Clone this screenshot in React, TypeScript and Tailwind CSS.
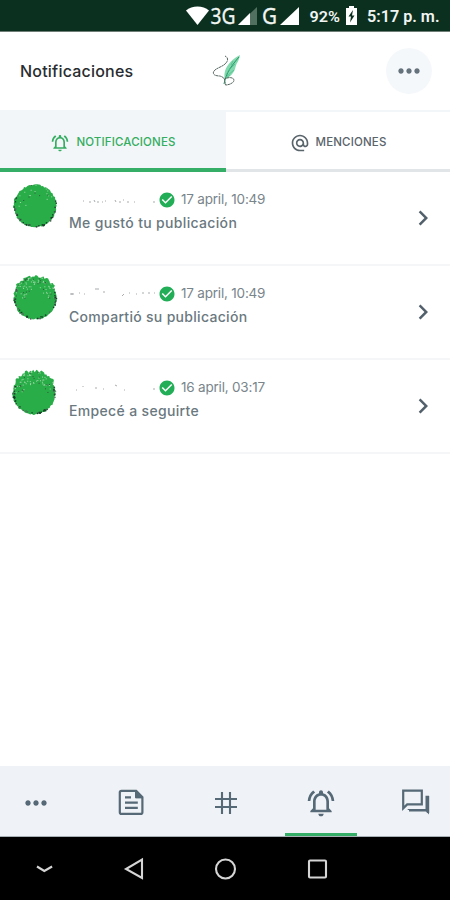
import React from 'react';
import {
  MdAlternateEmail,
  MdCheckCircle,
  MdChevronRight,
  MdMoreHoriz,
  MdOutlineNotificationsActive,
} from 'react-icons/md';

type Notice = {
  date: string;
  text: string;
  textClass: string;
  avatarClass: string;
  specks: number;
  name: string;
};

const notices: Notice[] = [
  {
    date: '17 april, 10:49',
    text: 'Me gustó tu publicación',
    textClass: 'tracking-[0.33px]',
    avatarClass: 'top-[10px] left-[11px]',
    specks: 22,
    name: 'M14 11h1M20 12h2M25 10l1 2M28 12h2M33 12h1M36 11h1M46 10l1 2M50 12h2M54 10h1M58 12h2M65 12h1M85 11v2',
  },
  {
    date: '17 april, 10:49',
    text: 'Compartió su publicación',
    textClass: 'tracking-[0.3px]',
    avatarClass: 'top-[8px] left-[11px]',
    specks: 85,
    name: 'M1 10h4M3 9v2M10 9h1M15 10h1M26 5h4M34 8h2M53 12l2-2M60 9h1M67 10h1M73 9h2M80 8v2M85 9h1',
  },
  {
    date: '16 april, 03:17',
    text: 'Empecé a seguirte',
    textClass: 'tracking-[0.34px]',
    avatarClass: 'top-[9px] left-[10px]',
    specks: 75,
    name: 'M7 12h1M14 8v1M27 9v2M34 11h1M46 7l2 1M55 12h1M84 11h2',
  },
];

function noise(n: number) {
  const v = Math.sin(n * 127.1) * 43758.5453;
  return v - Math.floor(v);
}

function Avatar({ seed, specks, className }: { seed: number; specks: number; className: string }) {
  const edge = Array.from({ length: 90 }, (_, i) => {
    const a = (i / 90) * Math.PI * 2;
    const top = Math.sin(a) < -0.5 && seed > 1 ? 1.8 : 0;
    const r = 20.6 + noise(i + seed * 100) * (1.4 + top);
    return `${(24 + Math.cos(a) * r).toFixed(2)},${(24 + Math.sin(a) * r).toFixed(2)}`;
  }).join(' ');
  const dots = Array.from({ length: specks }, (_, i) => {
    const a = Math.PI + noise(i + seed * 31) * Math.PI;
    const r = 21.5 - noise(i + seed * 57) ** 1.6 * 12;
    return (
      <rect
        key={i}
        x={24 + Math.cos(a) * r}
        y={24 + Math.sin(a) * r}
        width={1}
        height={1}
        fill={i % 4 === 0 ? '#35543c' : '#a5d8ac'}
      />
    );
  });
  const rim = Array.from({ length: 44 }, (_, i) => {
    const a = -0.3 + noise(i + seed * 71) * 3.9;
    const r = 21.3 - noise(i + seed * 13) * 1.8;
    return (
      <rect
        key={i}
        x={23.5 + Math.cos(a) * r}
        y={23.5 + Math.sin(a) * r}
        width={1.4}
        height={1.3}
        fill={i % 3 === 0 ? '#52685b' : '#173e27'}
      />
    );
  });
  return (
    <svg className={`absolute h-12 w-12 ${className}`} viewBox="0 0 48 48">
      <polygon points={edge} fill="#29ad48" />
      {dots}
      {rim}
    </svg>
  );
}

function Feather() {
  return (
    <svg className="h-10 w-9" viewBox="0 0 36 40" fill="none">
      <path d="M32 4C26 7 19 13 17 20c-1 4-.5 7-.5 9 5-3 10-7 11-13l1-3c2-3 3-6 3.500-9z" fill="#82d9ae" />
      <path d="M31 6C24 14 18 22 16 33" stroke="#259567" strokeWidth="1" />
      <path d="M18 24l4-7M19 25l7-6M21 19l6-6M23 14l2-4M17 28l5-4" stroke="#4bb989" strokeWidth=".7" />
      <path
        d="M17 5c3 1.500 3.500 4 1 7-3 4-11 5-12.500 9-1 3 3 4 6 4 3 .5 4 2 5 3 3-2 9-2 9.500 1 0 3-5 5-8.500 5l-1-6"
        stroke="#56675f"
        strokeWidth="1"
        strokeDasharray="2.500 .4"
      />
    </svg>
  );
}

function ArticleIcon() {
  return (
    <svg className="h-[27px] w-[27px]" viewBox="0 0 27 27" fill="none" stroke="#566976" strokeWidth="2.2">
      <path d="M3.500 1.900h14.700l6.200 6.200v15.100c0 1-.6 1.700-1.700 1.700H3.500c-1 0-1.700-.7-1.700-1.700V3.600c0-1 .7-1.700 1.700-1.700z" />
      <path d="M17.500 2v6.900h6.900z" fill="#566976" strokeWidth="1" />
      <path d="M7 8.400h6M7 13.600h12.800M7 18.800h12.800" />
    </svg>
  );
}

function HashIcon() {
  return (
    <svg className="h-6 w-6" viewBox="0 0 24 24" fill="none" stroke="#566976" strokeWidth="2.1">
      <path d="M8 1v22M16 1v22M1 8h22M1 16h22" />
    </svg>
  );
}

function ChatIcon() {
  return (
    <svg className="h-[30px] w-[30px]" viewBox="0 0 30 30" fill="none" stroke="#566976" strokeWidth="2.2">
      <path d="M2.200 2.700h18.600v13.700H6.200l-4 4z" />
      <path d="M6.700 22h17l4.300 4.500V7.700h-3.500v13.200H6.700z" fill="#566976" stroke="none" />
      <path d="M8 22.200h17.500M27 8v17" strokeWidth="2.400" />
    </svg>
  );
}

function StatusBar() {
  return (
    <div className="flex h-8 shrink-0 items-center border-b border-[#6f7f78] bg-[#0b3020] text-white">
      <svg className="ml-[175px] h-8 w-[275px] shrink-0" viewBox="175 0 275 32">
        <path d="M186 10.500c6-5.500 17-5.500 23 0L197.500 25z" fill="#fff" />
        <text x="210.500" y="24" fontFamily="'Noto Sans', sans-serif" fontSize="21" textLength="25" lengthAdjust="spacingAndGlyphs" fill="#f1f5f2" stroke="#f1f5f2" strokeWidth=".3">3G</text>
        <path d="M257 7v18h-19z" fill="#52705f" />
        <path d="M250 13v12h-12z" fill="#fff" />
        <text x="262" y="24" fontFamily="'Noto Sans', sans-serif" fontSize="21" textLength="15" lengthAdjust="spacingAndGlyphs" fill="#f1f5f2" stroke="#f1f5f2" strokeWidth=".3">G</text>
        <path d="M299 7v18h-19z" fill="#fff" />
        <text x="309.500" y="22" fontFamily="Roboto, sans-serif" fontWeight="600" fontSize="15.500" textLength="30.500" lengthAdjust="spacingAndGlyphs" fill="#f1f5f2">92%</text>
        <path d="M346 8h3V6h5v2h3v17h-11z" fill="#fff" />
        <path d="M353 10l-4.500 6.500h2.500l-1 6 4.500-7h-2.500z" fill="#0b3020" />
        <text x="367" y="22" fontFamily="Roboto, sans-serif" fontWeight="600" fontSize="16" textLength="72.500" lengthAdjust="spacingAndGlyphs" fill="#f1f5f2">5:17 p. m.</text>
      </svg>
    </div>
  );
}

export default function App() {
  return (
    <div className="flex h-[900px] w-[450px] flex-col overflow-hidden bg-white font-['Inter','Noto_Sans',sans-serif]">
      <StatusBar />
      <header className="grid h-[78px] shrink-0 grid-cols-[1fr_36px_1fr] items-center pr-[18px] pl-5">
        <h1 className="text-[16px] font-medium tracking-[0.21px] text-[#292d2f]">Notificaciones</h1>
        <Feather />
        <div className="flex h-[46px] w-[46px] items-center justify-center justify-self-end rounded-full bg-[#f5f8fa]">
          <MdMoreHoriz className="h-8 w-8 text-[#65737d]" />
        </div>
      </header>

      <div className="flex h-[62px] shrink-0 border-t-2 border-[#f3f6f8] text-[11.5px] font-medium">
        <div className="flex w-[226px] items-center justify-center gap-[6px] border-b-4 border-[#35ae67] bg-[#f2f6f9] pt-[5px] text-[#35ad60]">
          <MdOutlineNotificationsActive className="h-5 w-5" />
          <span className="tracking-[0.15px]">NOTIFICACIONES</span>
        </div>
        <div className="flex flex-1 items-center justify-center gap-[6px] border-b-[3px] border-[#e1e5e7] pt-[4px] text-[#59646b]">
          <MdAlternateEmail className="h-5 w-5" />
          <span className="tracking-[0.15px]">MENCIONES</span>
        </div>
      </div>

      <main className="flex-1">
        {notices.map((n, i) => (
          <div key={i} className="relative flex h-[94px] border-b-2 border-[#f4f6f7] pl-[69px]">
            <Avatar seed={i + 1} specks={n.specks} className={n.avatarClass} />
            <div className="flex flex-1 flex-col pt-[17px]">
              <div className="flex h-[21px] items-center">
                <svg className="h-5 w-[89px]" viewBox="0 0 89 20" fill="none" stroke="#9da3a4" strokeWidth=".9">
                  <path d={n.name} />
                </svg>
                <MdCheckCircle className="h-[18px] w-[18px] text-[#22ae57]" />
                <span className="ml-[5px] text-[13.5px] tracking-[-0.2px] text-[#79858b]">{n.date}</span>
              </div>
              <p className={`mt-[2px] text-[14px] leading-[21px] font-medium text-[#6a7880] ${n.textClass}`}>{n.text}</p>
            </div>
            <MdChevronRight className="mt-[31px] mr-[12px] h-[30px] w-[30px] text-[#51606a]" />
          </div>
        ))}
      </main>

      <nav className="h-[71px] shrink-0 overflow-hidden border-b border-[#a7b0b5] bg-[#eff2f6] text-[#566976]">
        <div className="-ml-[11px] grid h-full w-[474px] grid-cols-5 pt-[3px]">
          <div className="flex items-center justify-center"><MdMoreHoriz className="h-8 w-8" /></div>
          <div className="flex items-center justify-center"><ArticleIcon /></div>
          <div className="flex items-center justify-center"><HashIcon /></div>
          <div className="relative flex items-center justify-center">
            <MdOutlineNotificationsActive className="h-8 w-8" />
            <div className="absolute bottom-0 h-[3px] w-[72px] bg-[#35ae67]" />
          </div>
          <div className="flex items-center justify-center"><ChatIcon /></div>
        </div>
      </nav>

      <div className="h-[63px] shrink-0 bg-black">
        <svg className="h-[63px] w-[450px]" viewBox="0 0 450 63" fill="none" stroke="#d5d5d5" strokeWidth="2.1">
          <path d="M37 29.500l7.300 4.500 7.800-4.500" />
          <path d="M142 22.500v18.500L126 32z" />
          <circle cx="225.500" cy="32" r="9.500" />
          <rect x="309" y="23.500" width="17" height="17" rx="1" />
        </svg>
      </div>
    </div>
  );
}
